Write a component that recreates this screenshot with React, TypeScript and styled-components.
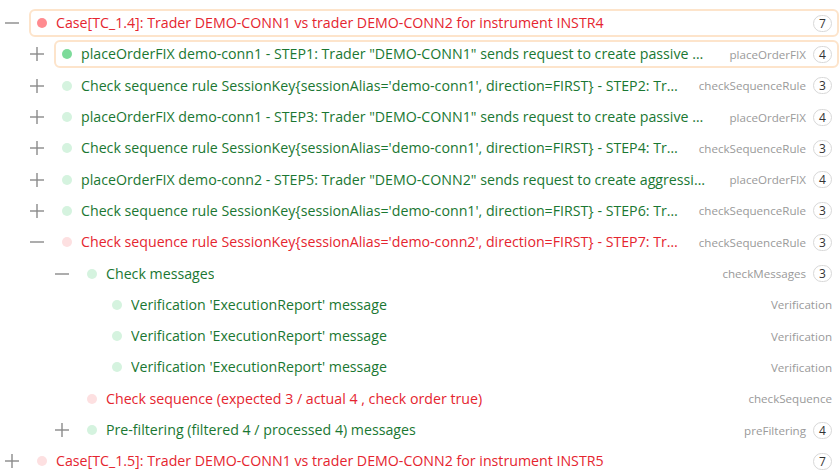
import React from 'react'
import styled, {createGlobalStyle, css} from 'styled-components'

const GlobalStyle = createGlobalStyle`
  html, body {
    margin: 0;
    padding: 0;
    background: #ffffff;
    overflow: hidden;
  }
  body {
    font-family: "Open Sans", "Noto Sans", sans-serif;
  }
`

type Status = 'passed' | 'failed'
type Toggle = 'plus' | 'minus' | 'none'

interface Node {
  level: number
  toggle: Toggle
  status: Status
  title: string
  type?: string
  count?: number
  selected?: boolean
  active?: boolean
}

const rows: Node[] = [
  {
    level: 0,
    toggle: 'minus',
    status: 'failed',
    title: 'Case[TC_1.4]: Trader DEMO-CONN1 vs trader DEMO-CONN2 for instrument INSTR4',
    count: 7,
    selected: true,
    active: true,
  },
  {
    level: 1,
    toggle: 'plus',
    status: 'passed',
    title:
      'placeOrderFIX demo-conn1 - STEP1: Trader "DEMO-CONN1" sends request to create passive order.',
    type: 'placeOrderFIX',
    count: 4,
    selected: true,
    active: true,
  },
  {
    level: 1,
    toggle: 'plus',
    status: 'passed',
    title:
      "Check sequence rule SessionKey{sessionAlias='demo-conn1', direction=FIRST} - STEP2: Trader checks",
    type: 'checkSequenceRule',
    count: 3,
  },
  {
    level: 1,
    toggle: 'plus',
    status: 'passed',
    title:
      'placeOrderFIX demo-conn1 - STEP3: Trader "DEMO-CONN1" sends request to create passive order.',
    type: 'placeOrderFIX',
    count: 4,
  },
  {
    level: 1,
    toggle: 'plus',
    status: 'passed',
    title:
      "Check sequence rule SessionKey{sessionAlias='demo-conn1', direction=FIRST} - STEP4: Trader checks",
    type: 'checkSequenceRule',
    count: 3,
  },
  {
    level: 1,
    toggle: 'plus',
    status: 'passed',
    title:
      'placeOrderFIX demo-conn2 - STEP5: Trader "DEMO-CONN2" sends request to create aggressive order.',
    type: 'placeOrderFIX',
    count: 4,
  },
  {
    level: 1,
    toggle: 'plus',
    status: 'passed',
    title:
      "Check sequence rule SessionKey{sessionAlias='demo-conn1', direction=FIRST} - STEP6: Trader checks",
    type: 'checkSequenceRule',
    count: 3,
  },
  {
    level: 1,
    toggle: 'minus',
    status: 'failed',
    title:
      "Check sequence rule SessionKey{sessionAlias='demo-conn2', direction=FIRST} - STEP7: Trader checks",
    type: 'checkSequenceRule',
    count: 3,
  },
  {level: 2, toggle: 'minus', status: 'passed', title: 'Check messages', type: 'checkMessages', count: 3},
  {level: 3, toggle: 'none', status: 'passed', title: "Verification 'ExecutionReport' message", type: 'Verification'},
  {level: 3, toggle: 'none', status: 'passed', title: "Verification 'ExecutionReport' message", type: 'Verification'},
  {level: 3, toggle: 'none', status: 'passed', title: "Verification 'ExecutionReport' message", type: 'Verification'},
  {
    level: 2,
    toggle: 'none',
    status: 'failed',
    title: 'Check sequence (expected 3 / actual 4 , check order true)',
    type: 'checkSequence',
  },
  {
    level: 2,
    toggle: 'plus',
    status: 'passed',
    title: 'Pre-filtering (filtered 4 / processed 4) messages',
    type: 'preFiltering',
    count: 4,
  },
  {
    level: 0,
    toggle: 'plus',
    status: 'failed',
    title: 'Case[TC_1.5]: Trader DEMO-CONN1 vs trader DEMO-CONN2 for instrument INSTR5',
    count: 7,
  },
]

const Tree = styled.div`
  display: flex;
  flex-direction: column;
  padding-top: 7.5px;
  width: 839px;
`

const Row = styled.div<{$level: number}>`
  height: 31.3px;
  display: flex;
  align-items: center;
  padding-left: ${(p) => p.$level * 25}px;
  box-sizing: border-box;
`

const ToggleButton = styled.div`
  width: 24px;
  height: 24px;
  flex: none;
  display: flex;
  align-items: center;
  justify-content: center;
  margin-right: 5px;
`

const Card = styled.div<{$selected?: boolean}>`
  flex: 1;
  min-width: 0;
  height: 28px;
  box-sizing: border-box;
  display: flex;
  align-items: center;
  padding: 0 5px 0 6px;
  border: 2px solid ${(p) => (p.$selected ? '#fde4cb' : 'transparent')};
  border-radius: 6px;
`

const Dot = styled.span<{$status: Status; $active?: boolean}>`
  width: 10px;
  height: 10px;
  border-radius: 50%;
  flex: none;
  margin-right: 9px;
  background: ${(p) =>
    p.$status === 'failed'
      ? p.$active
        ? '#ff8b90'
        : '#fde0e1'
      : p.$active
        ? '#7ddb9a'
        : '#d5f3df'};
`

const Title = styled.span<{$status: Status}>`
  flex: 0 1 auto;
  min-width: 0;
  white-space: nowrap;
  overflow: hidden;
  text-overflow: ellipsis;
  font-size: 14.2px;
  line-height: 20px;
  color: ${(p) => (p.$status === 'failed' ? '#e5252f' : '#1a7732')};
`

const Meta = styled.div`
  margin-left: auto;
  padding-left: 20px;
  flex: none;
  display: flex;
  align-items: center;
  gap: 7px;
`

const TypeLabel = styled.span`
  font-size: 11.6px;
  color: #9a9a9a;
  white-space: nowrap;
`

const Badge = styled.span`
  min-width: 19px;
  height: 17px;
  box-sizing: border-box;
  padding: 0 5px;
  border: 1px solid #d8d8d8;
  border-radius: 9px;
  font-size: 12px;
  line-height: 15px;
  text-align: center;
  color: #333;
`

const Icon = styled.svg`
  display: block;
`

const lineStroke = css`
  stroke: #8a8a8a;
  stroke-width: 1.4;
`

const Line = styled.line`
  ${lineStroke}
`

const ToggleIcon = ({kind}: {kind: Toggle}) => {
  if (kind === 'none') return null
  return (
    <Icon width="14" height="14" viewBox="0 0 14 14">
      <Line x1="0" y1="7" x2="14" y2="7" />
      {kind === 'plus' && <Line x1="7" y1="0" x2="7" y2="14" />}
    </Icon>
  )
}

export default function App() {
  return (
    <>
      <GlobalStyle />
      <Tree>
        {rows.map((r, i) => (
          <Row key={i} $level={r.level}>
            <ToggleButton>
              <ToggleIcon kind={r.toggle} />
            </ToggleButton>
            <Card $selected={r.selected}>
              <Dot $status={r.status} $active={r.active} />
              <Title $status={r.status}>{r.title}</Title>
              <Meta>
                {r.type && <TypeLabel>{r.type}</TypeLabel>}
                {r.count !== undefined && <Badge>{r.count}</Badge>}
              </Meta>
            </Card>
          </Row>
        ))}
      </Tree>
    </>
  )
}
